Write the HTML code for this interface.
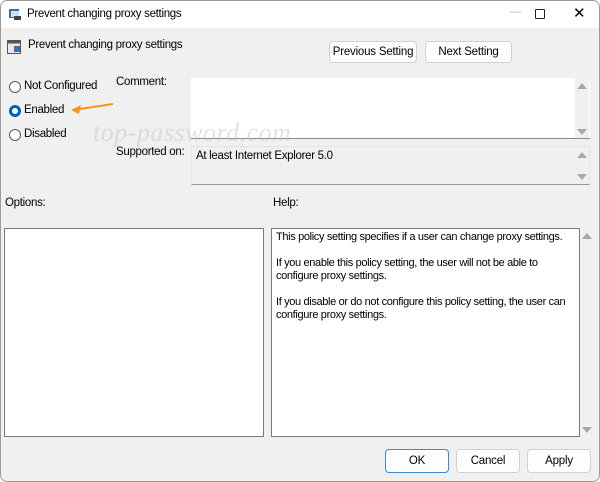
<!DOCTYPE html>
<html><head><style>
*{margin:0;padding:0;box-sizing:border-box}
body{width:600px;height:482px;background:#fff;font-family:"Liberation Sans",sans-serif;font-size:11.5px;color:#000;position:relative;overflow:hidden}
.win{position:absolute;left:0;top:0;width:600px;height:482px;background:#f0f0f0;border:1px solid #9a9a9a;border-radius:7px;overflow:hidden}
.title{position:absolute;left:0;top:0;width:600px;height:27px;background:#fff}
.a{position:absolute;white-space:nowrap;letter-spacing:-0.3px}
.btn{position:absolute;background:#fdfdfd;border:1px solid #d0d0d0;border-radius:4px;text-align:center;line-height:20px;letter-spacing:-0.2px}
.box{position:absolute;background:#fff;border:1px solid #7a7a7a}
.radio{position:absolute;width:12px;height:12px;border:1px solid #5a5a5a;border-radius:50%;background:#fff}
.tri{position:absolute;width:0;height:0;border-left:5px solid transparent;border-right:5px solid transparent}
.up{border-bottom:6px solid #a8a8a8}.dn{border-top:6px solid #a8a8a8}
</style></head><body><div class="win">
<div class="title"></div>
<svg style="position:absolute;left:7px;top:6px" width="14" height="14"><rect x="1" y="2" width="10" height="9" fill="#3a6fb0"/><rect x="3" y="4" width="8" height="6" fill="#cfe3f7"/><rect x="6" y="9" width="7" height="4" fill="#444"/></svg>
<div class="a" style="left:26px;top:7px">Prevent changing proxy settings</div>
<div class="a" style="left:509px;top:5px;color:#bbb">—</div>
<div style="position:absolute;left:534px;top:8px;width:10px;height:10px;border:1px solid #222;border-radius:1px"></div>
<div class="a" style="left:572px;top:3px;font-size:15px">✕</div>
<svg style="position:absolute;left:6px;top:39px" width="14" height="14"><rect x="0.5" y="0.5" width="13" height="13" fill="#e8e8e8" stroke="#555"/><rect x="0.5" y="0.5" width="13" height="3" fill="#555"/><rect x="7" y="6" width="6" height="6" fill="#3a6fb0"/></svg>
<div class="a" style="left:27px;top:38px">Prevent changing proxy settings</div>
<div class="btn" style="left:328px;top:40px;width:88px;height:22px">Previous Setting</div>
<div class="btn" style="left:424px;top:40px;width:87px;height:22px">Next Setting</div>
<div class="radio" style="left:8px;top:80px"></div>
<div class="a" style="left:23px;top:79px">Not Configured</div>
<div class="radio" style="left:8px;top:104px;border:3.5px solid #005fb8"></div>
<div class="a" style="left:23px;top:103px">Enabled</div>
<svg style="position:absolute;left:66px;top:99px" width="48" height="16"><path d="M46 4 L6 10" stroke="#f7931e" stroke-width="2"/><path d="M4 10 L14 5 L12 14 Z" fill="#f7931e"/></svg>
<div class="radio" style="left:8px;top:128px"></div>
<div class="a" style="left:23px;top:127px">Disabled</div>
<div class="a" style="left:115px;top:75px">Comment:</div>
<div class="a" style="left:115px;top:145px">Supported on:</div>
<div style="position:absolute;left:190px;top:77px;width:399px;height:61px;background:#fff;border-bottom:1px solid #8a8a8a"></div>
<div style="position:absolute;left:574px;top:77px;width:14px;height:60px;background:#f0f0f0"></div>
<div class="tri up" style="left:576px;top:82px"></div><div class="tri dn" style="left:576px;top:128px"></div>
<div style="position:absolute;left:190px;top:145px;width:399px;height:39px;background:#f0f0f0;border:1px solid #e4e4e4;border-bottom:1px solid #9a9a9a"></div>
<div class="a" style="left:195px;top:149px">At least Internet Explorer 5.0</div>
<div class="tri up" style="left:576px;top:151px"></div><div class="tri dn" style="left:576px;top:173px"></div>
<div class="a" style="left:92px;top:117px;font-size:26px;font-style:italic;font-family:'Liberation Serif',serif;color:rgba(190,190,190,.45);letter-spacing:0.5px">top-password.com</div>
<div class="a" style="left:4px;top:196px">Options:</div>
<div class="a" style="left:272px;top:196px">Help:</div>
<div class="box" style="left:3px;top:227px;width:260px;height:209px"></div>
<div class="box" style="left:270px;top:227px;width:309px;height:209px"></div>
<div class="a" style="left:275px;top:230px;line-height:13px;font-size:11px;letter-spacing:-0.35px">This policy setting specifies if a user can change proxy settings.<br><br>If you enable this policy setting, the user will not be able to<br>configure proxy settings.<br><br>If you disable or do not configure this policy setting, the user can<br>configure proxy settings.</div>
<div class="tri up" style="left:581px;top:232px"></div><div class="tri dn" style="left:581px;top:426px"></div>
<div class="btn" style="left:384px;top:448px;width:64px;height:24px;border:1px solid #3b88d6;line-height:22px">OK</div>
<div class="btn" style="left:455px;top:448px;width:64px;height:24px;line-height:22px">Cancel</div>
<div class="btn" style="left:526px;top:448px;width:64px;height:24px;line-height:22px">Apply</div>
</div></body></html>
